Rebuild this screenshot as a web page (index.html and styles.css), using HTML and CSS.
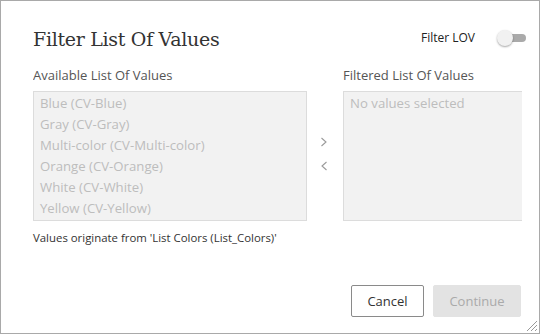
FILE: index.html
```html
<!DOCTYPE html>
<html>
<head>
<meta charset="utf-8">
<link rel="stylesheet" href="styles.css">
</head>
<body>
<div class="dialog">
  <div class="header">
    <h1 class="title">Filter List Of Values</h1>
    <div class="filter-toggle">
      <span class="toggle-label">Filter LOV</span>
      <span class="switch"><span class="track"></span><span class="knob"></span></span>
    </div>
  </div>
  <div class="lists">
    <div class="col col-left">
      <div class="label">Available List Of Values</div>
      <div class="listbox">
        <div class="item">Blue (CV-Blue)</div>
        <div class="item">Gray (CV-Gray)</div>
        <div class="item">Multi-color (CV-Multi-color)</div>
        <div class="item">Orange (CV-Orange)</div>
        <div class="item">White (CV-White)</div>
        <div class="item">Yellow (CV-Yellow)</div>
      </div>
    </div>
    <div class="arrows">
      <svg class="arrow" width="8" height="10" viewBox="0 0 8 10"><polyline points="1.5,1 6,5 1.5,9" fill="none" stroke="#9a9a9a" stroke-width="1.1"/></svg>
      <svg class="arrow" width="8" height="10" viewBox="0 0 8 10"><polyline points="6.5,1 2,5 6.5,9" fill="none" stroke="#9a9a9a" stroke-width="1.1"/></svg>
    </div>
    <div class="col col-right">
      <div class="label">Filtered List Of Values</div>
      <div class="listbox listbox-right">
        <div class="item">No values selected</div>
      </div>
    </div>
  </div>
  <div class="note">Values originate from 'List Colors (List_Colors)'</div>
  <div class="footer">
    <button class="btn btn-cancel">Cancel</button>
    <button class="btn btn-continue">Continue</button>
  </div>
  <svg class="grip" width="12" height="12" viewBox="0 0 12 12">
    <line x1="1" y1="11" x2="11" y2="1" stroke="#999" stroke-width="1"/>
    <line x1="5" y1="11" x2="11" y2="5" stroke="#999" stroke-width="1"/>
    <line x1="9" y1="11" x2="11" y2="9" stroke="#999" stroke-width="1"/>
  </svg>
</div>
</body>
</html>
```
FILE: styles.css
```css
html, body {
  margin: 0;
  padding: 0;
  background: #fff;
}
.dialog {
  position: relative;
  width: 540px;
  height: 334px;
  box-sizing: border-box;
  border: 1px solid #a9a9a9;
  background: #fff;
  font-family: "Open Sans", "Noto Sans", sans-serif;
  color: #333;
  display: flex;
  flex-direction: column;
}
.header {
  display: flex;
  justify-content: space-between;
  align-items: flex-start;
  padding: 24px 13px 0 32px;
}
.title {
  margin: 0;
  font-family: "DejaVu Serif", serif;
  font-weight: normal;
  font-size: 19px;
  line-height: 28px;
  letter-spacing: -0.3px;
  color: #333;
}
.filter-toggle {
  display: flex;
  align-items: center;
  gap: 22px;
  padding-top: 4px;
}
.toggle-label {
  font-size: 12px;
  color: #222;
}
.switch {
  position: relative;
  width: 29px;
  height: 16px;
  display: block;
}
.track {
  position: absolute;
  left: 6px;
  right: 0;
  top: 4px;
  height: 8px;
  border-radius: 4px;
  background: #aaa;
}
.knob {
  position: absolute;
  left: 0;
  top: 0;
  width: 16px;
  height: 16px;
  border-radius: 50%;
  background: #f1f1f1;
  box-shadow: 0 1px 2px rgba(0,0,0,0.35);
}
.lists {
  display: flex;
  margin: 13px 17px 0 32px;
  overflow: hidden;
}
.col {
  display: flex;
  flex-direction: column;
  gap: 7px;
  flex: none;
}
.col-left {
  width: 274px;
}
.col-right {
  width: 274px;
}
.label {
  font-size: 13px;
  line-height: 18px;
  color: #555;
}
.listbox {
  box-sizing: border-box;
  height: 130px;
  background: #f2f2f2;
  border: 1px solid #dcdcdc;
  padding: 1px 6px;
}
.item {
  font-size: 13.2px;
  line-height: 21px;
  color: #bdbdbd;
  white-space: nowrap;
}
.arrows {
  width: 36px;
  flex: none;
  display: flex;
  flex-direction: column;
  align-items: center;
  justify-content: center;
  gap: 14px;
  padding-top: 20px;
  padding-right: 2px;
  box-sizing: border-box;
}
.arrow {
  display: block;
}
.note {
  margin: 9px 0 0 32px;
  font-size: 11.4px;
  line-height: 16px;
  color: #333;
}
.footer {
  margin-top: auto;
  display: flex;
  justify-content: flex-end;
  gap: 9px;
  padding: 0 18px 16px 0;
}
.btn {
  box-sizing: border-box;
  height: 32px;
  font-family: "Open Sans", "Noto Sans", sans-serif;
  font-size: 13px;
  border-radius: 2px;
  padding: 0;
}
.btn-cancel {
  width: 73px;
  background: #fff;
  border: 1px solid #8a8a8a;
  color: #333;
}
.btn-continue {
  width: 88px;
  background: #e3e3e3;
  border: 1px solid #e3e3e3;
  color: #aaa;
}
.grip {
  position: absolute;
  right: 1px;
  bottom: 1px;
}
```
